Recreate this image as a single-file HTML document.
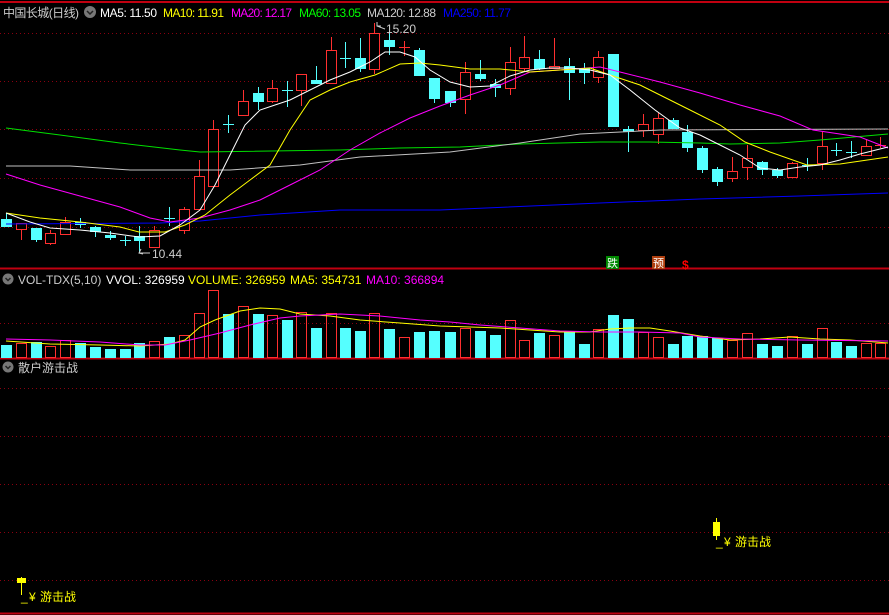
<!DOCTYPE html>
<html><head><meta charset="utf-8"><style>
html,body{margin:0;padding:0;background:#000;width:889px;height:615px;overflow:hidden}
svg{display:block}
text{font-family:"Liberation Sans","Noto Sans CJK SC",sans-serif;font-size:12px}
</style></head><body>
<svg id="s" width="889" height="615" xmlns="http://www.w3.org/2000/svg">
<rect width="889" height="615" fill="#000"/>
<line x1="0" y1="2" x2="889" y2="2" stroke="#c00010" stroke-width="2"/>
<g stroke="#8a0010" stroke-dasharray="1,3" stroke-width="1">
<line x1="0" y1="33.5" x2="889" y2="33.5"/><line x1="0" y1="81.5" x2="889" y2="81.5"/>
<line x1="0" y1="129.5" x2="889" y2="129.5"/><line x1="0" y1="178.5" x2="889" y2="178.5"/>
<line x1="0" y1="227.5" x2="889" y2="227.5"/><line x1="0" y1="323.5" x2="889" y2="323.5"/>
<line x1="0" y1="388.5" x2="889" y2="388.5"/><line x1="0" y1="436.5" x2="889" y2="436.5"/>
<line x1="0" y1="484.5" x2="889" y2="484.5"/><line x1="0" y1="532.5" x2="889" y2="532.5"/>
<line x1="0" y1="580.5" x2="889" y2="580.5"/>
</g>
<line x1="0" y1="268.5" x2="889" y2="268.5" stroke="#c00010" stroke-width="2"/>
<line x1="0" y1="358.5" x2="889" y2="358.5" stroke="#c00010" stroke-width="2"/>
<line x1="0" y1="613.5" x2="889" y2="613.5" stroke="#c00010" stroke-width="2"/>
<g id="c"></g>
<circle cx="90" cy="12" r="6" fill="#777"/><path d="M87 11l3 3 3-3" stroke="#222" fill="none" stroke-width="1.5"/>
<text x="3" y="17" fill="#ccc" textLength="76">中国长城(日线)</text>
<text x="100" y="17" fill="#fff" textLength="57">MA5: 11.50</text>
<text x="163" y="17" fill="#ff0" textLength="61">MA10: 11.91</text>
<text x="231" y="17" fill="#f0f" textLength="61">MA20: 12.17</text>
<text x="299" y="17" fill="#0f0" textLength="62">MA60: 13.05</text>
<text x="367" y="17" fill="#ccc" textLength="69">MA120: 12.88</text>
<text x="443" y="17" fill="#00f" textLength="68">MA250: 11.77</text>
<circle cx="8" cy="279" r="5.5" fill="#777"/><path d="M5.5 278l2.5 2.5 2.5-2.5" stroke="#222" fill="none" stroke-width="1.5"/>
<text x="18" y="284" fill="#ccc">VOL-TDX(5,10)</text>
<text x="106" y="284" fill="#fff">VVOL: 326959</text>
<text x="188" y="284" fill="#ff0">VOLUME: 326959</text>
<text x="290" y="284" fill="#ff0">MA5: 354731</text>
<text x="366" y="284" fill="#f0f">MA10: 366894</text>
<circle cx="8" cy="367" r="5.5" fill="#777"/><path d="M5.5 366l2.5 2.5 2.5-2.5" stroke="#222" fill="none" stroke-width="1.5"/>
<text x="18" y="372" fill="#ccc">散户游击战</text>
<text x="386" y="33" fill="#ccc" textLength="30">15.20</text>
<path d="M377 22v4h4M377 26l8 3" stroke="#ccc" fill="none"/>
<text x="152" y="258" fill="#ccc">10.44</text>
<path d="M141 249l-2 4 4 1M139 253h11" stroke="#ccc" fill="none"/>
<rect x="606" y="256" width="13" height="13" fill="#080"/><text x="607" y="267" fill="#fff" style="font-size:11px">跌</text>
<rect x="652" y="256" width="13" height="13" fill="#b04010"/><text x="653" y="267" fill="#fff" style="font-size:11px">预</text>
<text x="682" y="269" fill="#f00" style="font-size:12px;font-weight:bold">$</text>
<line x1="21.5" y1="577" x2="21.5" y2="595" stroke="#ff0"/>
<rect x="17" y="578" width="9" height="5" fill="#ff0"/>
<text x="21" y="601" fill="#ff0">_</text><text x="29" y="601" fill="#ff0">¥</text><text x="40" y="601" fill="#ff0">游击战</text>
<line x1="716.5" y1="518" x2="716.5" y2="540" stroke="#ff0"/>
<rect x="713" y="522" width="7" height="14" fill="#ff0"/>
<text x="716" y="546" fill="#ff0">_</text><text x="724" y="546" fill="#ff0">¥</text><text x="735" y="546" fill="#ff0">游击战</text>
</svg>
<script>
var C=[[6,0,219,227,213,227],[21,1,223,229,223,240],[36,0,228,240,228,242],[50,1,233,243,230,245],[65,1,222,234,217,234],[80,0,222,225,218,228],[95,0,227,232,226,237],[110,0,235,238,231,240],[125,0,240,240,236,246],[139,0,236,241,226,253],[154,1,230,247,226,248],[169,0,218,219,207,226],[184,1,209,230,207,234],[199,1,176,209,160,209],[213,1,129,186,120,186],[228,0,124,124,115,133],[243,1,101,115,90,115],[258,0,93,102,87,110],[272,1,88,101,80,103],[287,0,90,90,81,107],[301,1,74,90,74,106],[316,0,80,84,66,84],[331,1,50,83,37,83],[345,0,58,58,42,68],[360,0,58,69,38,72],[374,1,33,69,23,74],[389,0,40,47,27,55],[404,1,47,47,41,56],[419,0,50,76,48,76],[434,0,78,99,78,103],[450,0,91,103,91,107],[465,1,72,99,62,114],[480,0,74,79,60,81],[495,0,84,88,79,97],[510,1,62,88,47,95],[524,1,57,68,36,71],[539,0,59,69,50,70],[554,1,66,68,38,68],[569,0,66,73,58,100],[584,0,68,73,63,84],[598,1,57,77,51,83],[613,0,54,127,54,127],[628,0,129,132,126,152],[643,1,124,130,114,137],[658,1,118,134,113,144],[673,0,120,129,118,129],[687,0,132,148,125,152],[702,0,148,170,146,173],[717,0,169,182,167,186],[732,1,171,178,157,182],[747,1,158,167,145,180],[762,0,162,170,161,175],[777,0,170,176,168,178],[792,1,163,177,162,177],[807,0,165,165,158,171],[822,1,146,163,132,170],[836,0,150,150,143,156],[851,0,152,152,141,158],[866,1,146,155,140,155],[880,1,145,145,137,148]];
var V=[345,343,342,346,340,343,347,349,349,343,341,337,335,313,290,314,306,314,315,320,312,328,313,328,331,313,329,337,332,331,332,328,331,335,320,340,333,335,332,344,329,315,319,332,337,344,336,336,338,340,333,344,346,336,344,328,342,346,343,343];
var h='',R='#ff3030',B='#55ffff';
C.forEach(function(c,i){var x=c[0],col=c[1]?R:B;
h+='<line x1="'+(x+.5)+'" y1="'+c[4]+'" x2="'+(x+.5)+'" y2="'+c[2]+'" stroke="'+col+'"/><line x1="'+(x+.5)+'" y1="'+c[3]+'" x2="'+(x+.5)+'" y2="'+c[5]+'" stroke="'+col+'"/>';
var hh=c[3]-c[2];
if(hh<1)h+='<line x1="'+(x-5)+'" y1="'+(c[2]+.5)+'" x2="'+(x+6)+'" y2="'+(c[2]+.5)+'" stroke="'+col+'" stroke-width="1"/>';
else if(c[1])h+='<rect x="'+(x-4.5)+'" y="'+(c[2]+.5)+'" width="10" height="'+hh+'" fill="#000" stroke="'+R+'"/>';
else h+='<rect x="'+(x-5)+'" y="'+c[2]+'" width="11" height="'+hh+'" fill="'+B+'"/>';
var v=V[i];if(v!==undefined){if(c[1])h+='<rect x="'+(x-4.5)+'" y="'+(v+.5)+'" width="10" height="'+(357-v)+'" fill="none" stroke="'+R+'"/>';else h+='<rect x="'+(x-5)+'" y="'+v+'" width="11" height="'+(358-v)+'" fill="'+B+'"/>';}
});
function L(p,col){h+='<polyline fill="none" stroke="'+col+'" stroke-width="1" points="'+p+'"/>';}
L('6,128 60,135 120,143 180,150 200,152 340,150 400,148 460,147 520,144 600,142 650,142 700,143 730,144 780,143 820,140 888,134','#00e000');
L('6,166 70,166 130,170 230,170 300,165 360,157 450,152 520,143 580,134 660,130 888,129','#c0c0c0');
L('6,224 160,223 200,221 260,215 340,210 440,210 600,203 700,199 800,196 888,193','#0000ff');
L('6,174 40,185 80,196 120,207 150,218 170,222 200,218 230,210 260,200 290,185 320,170 350,150 380,133 410,118 440,106 470,95 500,85 530,72 560,70 600,67 620,72 660,82 700,93 740,105 780,116 813,130 860,137 888,148','#ff00ff');
L('6,213 40,218 80,222 120,227 139,232 165,232 185,225 205,215 230,195 250,180 270,165 290,130 310,100 330,90 350,82 375,75 400,64 420,63 440,65 470,69 500,69 530,72 560,70 590,68 610,75 640,85 660,95 690,110 720,125 745,142 770,152 807,165 840,164 888,157','#ffff00');
L('6,213 30,222 50,228 80,230 110,233 139,237 160,236 180,225 200,210 215,185 230,155 245,125 260,110 275,105 290,100 310,90 330,80 350,72 370,62 385,52 400,52 415,57 430,70 450,82 470,87 490,86 510,76 530,70 550,68 570,68 590,70 610,75 630,90 655,110 680,128 700,135 720,145 740,155 760,168 780,170 800,167 820,165 840,160 860,154 888,147','#ffffff');
L('6,341 50,344 100,345 140,346 170,344 185,340 200,327 215,320 240,311 260,308 280,309 300,314 330,316 360,320 400,323 440,326 470,327 500,328 530,330 560,332 590,332 610,329 630,328 650,328 670,331 700,336 730,340 760,339 790,337 820,339 850,340 888,343','#ffff00');
L('6,339 50,340 100,342 140,345 165,345 190,340 220,333 250,325 280,318 300,316 340,314 380,316 420,320 450,322 480,325 520,328 560,331 600,332 640,332 680,333 700,337 740,339 800,340 888,341','#ff00ff');
document.getElementById('c').innerHTML=h;
</script>
</body></html>
